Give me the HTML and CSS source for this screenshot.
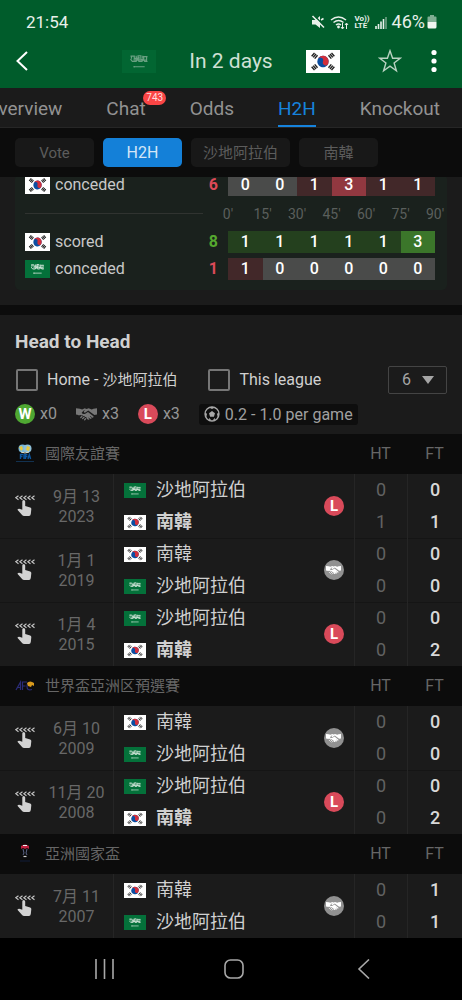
FILE: index.html
```html
<!DOCTYPE html>
<html lang="zh-Hant">
<head>
<meta charset="utf-8">
<meta name="viewport" content="width=device-width, initial-scale=1">
<title>H2H</title>
<link rel="stylesheet" href="styles.css">
</head>
<body>
<svg class="defs" aria-hidden="true">
  <symbol id="kr" viewBox="0 0 36 24" preserveAspectRatio="none">
    <rect width="36" height="24" fill="#fff"/>
    <g transform="rotate(20 18 12)">
      <circle cx="18" cy="12" r="6" fill="#0b4ea2"/>
      <path d="M12 12a6 6 0 0 1 12 0a3 3 0 0 1-6 0a3 3 0 0 0-6 0z" fill="#d22f3c"/>
    </g>
    <g stroke="#222" stroke-width="1.500">
      <path d="M6 6.500l3-3.500M7.600 7.700l3-3.500M9.200 9l3-3.500"/>
      <path d="M30 17.500l-3 3.500M28.400 16.300l-3 3.500M26.800 15l-3 3.500"/>
      <path d="M30 6.500l-3-3.500M28.400 7.700l-3-3.500M26.800 9l-3-3.500"/>
      <path d="M6 17.500l3 3.500M7.600 16.300l3 3.500M9.200 15l3 3.500"/>
    </g>
  </symbol>
  <symbol id="sa" viewBox="0 0 36 24" preserveAspectRatio="none">
    <rect width="36" height="24" fill="#04713a"/>
    <g stroke="#cfe4d7" fill="none">
      <path d="M9 6.500h4v2.500h4v-3h3v4h3v-3h4M9 9.500l2 2.500h4l1-3 2 3h3l2-2 1 2h3M10 6v3M15 6v3M18 7v4M22 6v3M26 7v5M12 10.500h14" stroke-width="1.300"/>
      <path d="M12 17.500h12M13 16.800v1.500" stroke-width="1.100"/>
    </g>
  </symbol>
  <symbol id="shake" viewBox="0 0 24 16">
    <path fill="currentColor" d="M0 1.500L4.500 2l2.500.8L10 1.500l2 .7L14.500 1.500 18 2.800 20 2l4-.5v7.200l-3 .5-7-5.200-3.300 2.300c-1.200.6-2.300-.5-1.500-1.600L11 3.200 8.500 4.300 6.500 6.700c.7 1.800 3 1.600 4.600.6l2.600-1.700 6.200 5.100c.6 1-.6 1.900-1.500 1.200l-2.200-1.600-.3.500 2 1.600c.2 1-.8 1.500-1.600 1.100l-2-1.500-.3.500 1.500 1.300c-.5 1-1.800.7-2.500.1l-.8-.8c0-1.200-.9-1.800-1.900-1.600-.2-1.100-1.200-1.600-2.100-1.200-.4-1-1.600-1.300-2.400-.6-.6-.8-1.800-.7-2.400.1L2.500 9 0 8.700z"/>
    <path d="M5.500 12l1.300-1.300M7.600 13.300l1.500-1.500M9.900 14.500l1-1" stroke="currentColor" stroke-width="1.500" stroke-linecap="round"/>
  </symbol>
  <symbol id="swipe" viewBox="0 0 20 22">
    <path d="M3.500.7L.8 2.700l2.700 2M7.500.7l-2.700 2 2.700 2M11.500.7l-2.700 2 2.700 2M15.500.7l-2.700 2 2.700 2M19.500.7l-2.700 2 2.700 2" fill="none" stroke="#c8c8c8" stroke-width="1.100"/>
    <path d="M7.300 6.500q0-1.500 1.400-1.500t1.500 1.500V11l5 1.500q1.300.5 1.100 1.700L15.800 19q-.3 2-1.800 2H9q-1 0-1.700-.8L2.400 14.800q.9-1.500 2.700-.8l2.200.8z" fill="#d2d2d2"/>
  </symbol>
</svg>

<header class="top">
  <div class="status">
    <time>21:54</time>
    <div class="status-icons">
      <svg width="14" height="14" viewBox="0 0 14 14"><path d="M1 5h3.500L9 1v12L4.500 9.500H1z" fill="#e8f0ea"/><path d="M3 .5l11 11" stroke="#005c2b" stroke-width="1.500"/><path d="M1.500 1L13 12.500M10 5l2.500-1.500" stroke="#e8f0ea" stroke-width="1.600"/></svg>
      <svg width="19" height="15" viewBox="0 0 19 15"><path d="M1 5q7.500-6 15 0M3.500 7.500q5-4 10 0M6 10q2.500-2 5 0" fill="none" stroke="#e8f0ea" stroke-width="1.500"/><circle cx="8.500" cy="12" r="1.400" fill="#e8f0ea"/><path d="M12.500 8v5.500M11 12l1.500 2 1.500-2M16.500 14V8.500M15 10l1.500-2L18 10" fill="none" stroke="#e8f0ea"/></svg>
      <span class="volte"><span>Vo))</span><span>LTE</span></span>
      <svg width="12" height="13" viewBox="0 0 12 13"><path d="M1 13v-3M3.500 13V8M6 13V5.500M8.500 13V3" stroke="#e8f0ea" stroke-width="1.600"/><path d="M11 13V1" stroke="#6fa085" stroke-width="1.600"/></svg>
      <span class="battery"><span>46%</span><svg width="10" height="14" viewBox="0 0 10 14"><path d="M3 0h4v1.500h1.500q1 0 1 1V7h-9V2.500q0-1 1-1H3z" fill="#7fae93"/><path d="M.5 7h9v5q0 1.500-1.500 1.500H2Q.5 13.500.5 12z" fill="#f0f5f1"/></svg></span>
    </div>
  </div>
  <div class="bar">
    <button class="icon-btn" aria-label="Back"><svg width="12" height="20" viewBox="0 0 12 20"><path d="M11 1L1.500 10 11 19" fill="none" stroke="#fff" stroke-width="2"/></svg></button>
    <div class="fixture">
      <svg class="flag-lg dim"><use href="#sa"/></svg>
      <h1>In 2 days</h1>
      <svg class="flag-lg"><use href="#kr"/></svg>
    </div>
    <div class="actions">
      <button class="icon-btn" aria-label="Favourite"><svg width="24" height="24" viewBox="0 0 24 24"><path d="M12 1.800l2.600 7.500h7.600l-6.100 4.700 2.300 7.800-6.400-4.700-6.400 4.700L7.900 14 1.800 9.300h7.600z" fill="none" stroke="#b9d2c2" stroke-width="1.400"/></svg></button>
      <button class="icon-btn" aria-label="More"><svg width="6" height="24" viewBox="0 0 6 24"><circle cx="3" cy="3.500" r="2.600" fill="#fff"/><circle cx="3" cy="12" r="2.600" fill="#fff"/><circle cx="3" cy="20.500" r="2.600" fill="#fff"/></svg></button>
    </div>
  </div>
</header>

<nav class="tabs">
  <a href="#">Overview</a>
  <a href="#">Chat<span class="count">743</span></a>
  <a href="#">Odds</a>
  <a href="#" class="active" aria-current="page">H2H</a>
  <a href="#">Knockout</a>
</nav>

<div class="chips">
  <button>Vote</button>
  <button class="on">H2H</button>
  <button>沙地阿拉伯</button>
  <button>南韓</button>
</div>

<main>
  <section class="stats">
    <div class="card">
      <div class="stat">
        <svg class="flag-md"><use href="#kr"/></svg><span>conceded</span><b class="red">6</b>
        <div class="cells"><i>0</i><i>0</i><i class="r1">1</i><i class="r3">3</i><i class="r1">1</i><i class="r1">1</i></div>
      </div>
      <div class="axis">
        <hr>
        <div class="marks"><span>0'</span><span>15'</span><span>30'</span><span>45'</span><span>60'</span><span>75'</span><span>90'</span></div>
      </div>
      <div class="stat">
        <svg class="flag-md"><use href="#kr"/></svg><span>scored</span><b class="green">8</b>
        <div class="cells"><i class="g1">1</i><i class="g1">1</i><i class="g1">1</i><i class="g1">1</i><i class="g1">1</i><i class="g3">3</i></div>
      </div>
      <div class="stat">
        <svg class="flag-md"><use href="#sa"/></svg><span>conceded</span><b class="red">1</b>
        <div class="cells"><i class="r1">1</i><i>0</i><i>0</i><i>0</i><i>0</i><i>0</i></div>
      </div>
    </div>
  </section>

  <section class="h2h">
    <h2>Head to Head</h2>
    <div class="filters">
      <label class="home"><input type="checkbox"><span>Home - <span class="zh">沙地阿拉伯</span></span></label>
      <label><input type="checkbox"><span>This league</span></label>
      <div class="select">
        <select aria-label="Matches"><option>6</option></select>
        <svg width="12" height="8" viewBox="0 0 12 8"><path d="M0 0h12L6 8z" fill="#a5a5a5"/></svg>
      </div>
    </div>
    <div class="summary">
      <span class="sum"><span class="dot win">W</span>x0</span>
      <span class="sum"><svg class="shake"><use href="#shake"/></svg>x3</span>
      <span class="sum"><span class="dot loss">L</span>x3</span>
      <span class="avg"><svg width="16" height="16" viewBox="0 0 16 16"><circle cx="8" cy="8" r="7" fill="none" stroke="#a8a8a8" stroke-width="1.300"/><path d="M8 5l3 2.200-1.100 3.500H6.100L5 7.200zM5 1.500L8 3l3-1.500L8 .8zM1.300 6L3 8l-.7 3L1 8.500zM14.700 6L13 8l.7 3L15 8.500zM4.500 13.500l1-1.500 2 2.800zM11.500 13.500l-1-1.500-2 2.800z" fill="#a8a8a8"/></svg>0.2 - 1.0 per game</span>
    </div>

    <table>
      <colgroup><col class="c-swipe"><col class="c-date"><col><col class="c-result"><col class="c-ht"><col class="c-ft"></colgroup>
      <tbody>
        <tr class="league"><th colspan="4"><div><svg width="20" height="20" viewBox="0 0 20 20"><circle cx="7.500" cy="4.500" r="4" fill="#79b8d8"/><circle cx="12.500" cy="4.500" r="4" fill="#8fc0d8"/><path d="M4 3l3-1 1 3-2 2zM12 2l3 1-1 4-3-1z" fill="#e9c93f"/><path d="M6 8l4 1 4-1" stroke="#e8e8d0" fill="none"/><path d="M5.500 15v-4.500H8M5.500 12.500h2M9 10v5M10.500 15v-4.500h2M10.500 12.500h2M13 15l1.300-4.500 1.300 4.500" stroke="#0b56a0" stroke-width="1.400" fill="none"/><path d="M1 17.500h18" stroke="#12314f"/></svg><span>國際友誼賽</span></div></th><th>HT</th><th>FT</th></tr>
        <tr class="m"><td rowspan="2" class="swipe"><svg><use href="#swipe"/></svg></td><td rowspan="2" class="date">9月 13<br>2023</td><td class="team"><div><svg><use href="#sa"/></svg>沙地阿拉伯</div></td><td rowspan="2" class="res"><span class="dot loss">L</span></td><td class="ht">0</td><td class="ft">0</td></tr>
        <tr><td class="team won"><div><svg><use href="#kr"/></svg>南韓</div></td><td class="ht">1</td><td class="ft">1</td></tr>
        <tr class="m"><td rowspan="2" class="swipe"><svg><use href="#swipe"/></svg></td><td rowspan="2" class="date">1月 1<br>2019</td><td class="team"><div><svg><use href="#kr"/></svg>南韓</div></td><td rowspan="2" class="res"><span class="dot draw"><svg><use href="#shake"/></svg></span></td><td class="ht">0</td><td class="ft">0</td></tr>
        <tr><td class="team"><div><svg><use href="#sa"/></svg>沙地阿拉伯</div></td><td class="ht">0</td><td class="ft">0</td></tr>
        <tr class="m"><td rowspan="2" class="swipe"><svg><use href="#swipe"/></svg></td><td rowspan="2" class="date">1月 4<br>2015</td><td class="team"><div><svg><use href="#sa"/></svg>沙地阿拉伯</div></td><td rowspan="2" class="res"><span class="dot loss">L</span></td><td class="ht">0</td><td class="ft">0</td></tr>
        <tr><td class="team won"><div><svg><use href="#kr"/></svg>南韓</div></td><td class="ht">0</td><td class="ft">2</td></tr>
      </tbody>
      <tbody>
        <tr class="league"><th colspan="4"><div><svg width="20" height="20" viewBox="0 0 20 20"><path d="M1 14L5.500 6v8M3 11.500h3M7.500 14V6H12M7.500 10h3M16 7q-4-1-4 3.500t5 3" stroke="#2b2c78" stroke-width="1.200" fill="none"/><path d="M12 7q3-3 7 0v3l-2-1-1 2-3-1z" fill="#d99a1c"/></svg><span>世界盃亞洲区預選賽</span></div></th><th>HT</th><th>FT</th></tr>
        <tr class="m"><td rowspan="2" class="swipe"><svg><use href="#swipe"/></svg></td><td rowspan="2" class="date">6月 10<br>2009</td><td class="team"><div><svg><use href="#kr"/></svg>南韓</div></td><td rowspan="2" class="res"><span class="dot draw"><svg><use href="#shake"/></svg></span></td><td class="ht">0</td><td class="ft">0</td></tr>
        <tr><td class="team"><div><svg><use href="#sa"/></svg>沙地阿拉伯</div></td><td class="ht">0</td><td class="ft">0</td></tr>
        <tr class="m"><td rowspan="2" class="swipe"><svg><use href="#swipe"/></svg></td><td rowspan="2" class="date">11月 20<br>2008</td><td class="team"><div><svg><use href="#sa"/></svg>沙地阿拉伯</div></td><td rowspan="2" class="res"><span class="dot loss">L</span></td><td class="ht">0</td><td class="ft">0</td></tr>
        <tr><td class="team won"><div><svg><use href="#kr"/></svg>南韓</div></td><td class="ht">0</td><td class="ft">2</td></tr>
      </tbody>
      <tbody>
        <tr class="league"><th colspan="4"><div><svg width="20" height="20" viewBox="0 0 20 20"><path d="M6 2q4-3 8 0v3l-2-1-2 1-2-1-2 1z" fill="#c0203f"/><path d="M8 1.500h4" stroke="#eee"/><path d="M8 5l1 4-1 2M12 5l-1 4 1 2" stroke="#5c6688" fill="none"/><path d="M8.500 12.500h3" stroke="#ccc" stroke-width="1.200"/><path d="M5 17h10" stroke="#101c38"/></svg><span>亞洲國家盃</span></div></th><th>HT</th><th>FT</th></tr>
        <tr class="m"><td rowspan="2" class="swipe"><svg><use href="#swipe"/></svg></td><td rowspan="2" class="date">7月 11<br>2007</td><td class="team"><div><svg><use href="#kr"/></svg>南韓</div></td><td rowspan="2" class="res"><span class="dot draw"><svg><use href="#shake"/></svg></span></td><td class="ht">0</td><td class="ft">1</td></tr>
        <tr><td class="team"><div><svg><use href="#sa"/></svg>沙地阿拉伯</div></td><td class="ht">0</td><td class="ft">1</td></tr>
      </tbody>
    </table>
  </section>
</main>

<footer class="sysnav">
  <button aria-label="Recents"><svg width="20" height="20" viewBox="0 0 20 20"><path d="M2 0v20M10.500 0v20M19 0v20" stroke="#a8a8a8" stroke-width="1.600"/></svg></button>
  <button aria-label="Home"><svg width="20" height="20" viewBox="0 0 20 20"><rect x="1" y="1" width="18" height="18" rx="5.500" fill="none" stroke="#a8a8a8" stroke-width="1.600"/></svg></button>
  <button aria-label="Back"><svg width="20" height="20" viewBox="0 0 20 20"><path d="M15 .5L5 10l10 9.500" fill="none" stroke="#a8a8a8" stroke-width="1.600"/></svg></button>
</footer>
</body>
</html>
```
FILE: styles.css
```css
* { box-sizing: border-box; }
body {
  margin: 0;
  min-height: 100vh;
  display: flex;
  flex-direction: column;
  background: #000;
  color: #c8c8c8;
  font: 16px/20px Roboto, "Noto Sans CJK TC", sans-serif;
}
svg { display: block; flex: none; }
button { font: inherit; color: inherit; border: 0; background: none; padding: 0; }
.defs { position: absolute; width: 0; height: 0; }

.top { background: #005c2b; }
.status {
  height: 44px;
  padding: 0 25px 0 26px;
  display: flex;
  align-items: center;
  justify-content: space-between;
  color: #e8f0ea;
  font-size: 17px;
}
.status-icons { display: flex; align-items: center; gap: 5px; }
.volte { display: flex; flex-direction: column; font-size: 8px; line-height: 7px; font-weight: 700; }
.battery { display: flex; align-items: center; gap: 2px; font-size: 18px; }
.bar {
  height: 44px;
  padding: 0 16px 10px;
  display: grid;
  grid-template-columns: 1fr auto 1fr;
  align-items: center;
}
.icon-btn { display: flex; }
.fixture { display: flex; justify-content: center; align-items: center; gap: 33px; }
.flag-lg { width: 34px; height: 23px; }
.dim { opacity: .5; }
.actions { display: flex; justify-content: flex-end; gap: 29px; padding-right: 9px; }
h1 { margin: 0; font-size: 21px; font-weight: 400; line-height: 24px; color: #cfe0d5; white-space: nowrap; }

.tabs {
  height: 40px;
  background: #1b1b1b;
  border-bottom: 1px solid #262626;
  display: flex;
  justify-content: flex-end;
  gap: 44px;
  padding-right: 22px;
  overflow: hidden;
}
.tabs a {
  position: relative;
  color: #929292;
  text-decoration: none;
  font-size: 19px;
  line-height: 42px;
}
.tabs .active { color: #1683dd; border-bottom: 2px solid #1683dd; }
.count {
  position: absolute;
  top: 3px;
  left: 37px;
  padding: 0 3px;
  border-radius: 7px;
  background: #fa4545;
  color: #ffdede;
  font-size: 10px;
  line-height: 14px;
}

.chips { background: #0c0c0c; padding: 10px 15px; display: flex; gap: 9px; }
.chips button {
  min-width: 79px;
  height: 29px;
  padding: 0 12px;
  border-radius: 5px;
  background: #181818;
  color: #5c5c5c;
  font-size: 15px;
}
.chips .on { background: #1480d8; color: #d3e6f7; font-size: 16px; }

.stats {
  background: #1b1b1b;
  padding: 0 15px 15px;
  border-bottom: 10px solid #0c0c0c;
  overflow: hidden;
}
.card {
  margin-top: -3px;
  padding: 0 12px 10px 10px;
  border-radius: 5px;
  background: #1a211d;
}
.stat { display: grid; grid-template-columns: 25px 1fr auto 207px; align-items: center; height: 22px; }
.stat + .stat { margin-top: 5px; }
.stat > span { padding-left: 5px; }
.stat > b { padding-right: 10px; }
.flag-md { width: 25px; height: 18px; }
.red { color: #dc4a58; }
.green { color: #55a82f; }
.cells { display: grid; grid-template-columns: repeat(6, 1fr); }
.cells i {
  background: #4a4b4a;
  color: #fff;
  text-align: center;
  font-style: normal;
  font-weight: 500;
  line-height: 22px;
}
.cells .r1 { background: #422829; }
.cells .r3 { background: #913840; }
.cells .g1 { background: #24401e; }
.cells .g3 { background: #3b762a; }
.axis { height: 35px; display: grid; grid-template-columns: 1fr 207px; column-gap: 25px; align-items: center; }
hr { width: 100%; margin: 0; border: 0; border-top: 1px solid #303330; }
.marks { display: flex; justify-content: space-between; color: #5a5f5c; font-size: 14px; }
.marks span { width: 0; display: flex; justify-content: center; }

.h2h { background: #1b1b1b; }
h2 { margin: 0; padding: 17px 15px 14px; font-size: 19px; line-height: 20px; font-weight: 700; color: #d0d0d0; }
.filters { display: flex; align-items: center; padding: 0 15px 0 16px; }
.filters label { display: flex; align-items: center; gap: 9px; color: #d0d0d0; }
.home { margin-right: 31px; }
.zh { font-size: 15px; }
.filters input {
  appearance: none;
  width: 22px;
  height: 22px;
  margin: 0;
  border: 2px solid #767676;
  border-radius: 2px;
}
.select { display: grid; align-items: center; margin-left: auto; width: 59px; }
.select > * { grid-area: 1 / 1; }
.select select {
  appearance: none;
  height: 28px;
  padding: 0 13px;
  border: 1px solid #444;
  border-radius: 2px;
  background: none;
  color: #a5a5a5;
  font: inherit;
}
.select svg { justify-self: end; margin-right: 13px; pointer-events: none; }
.summary { display: flex; align-items: center; gap: 19px; padding: 9px 15px; height: 40px; color: #959595; }
.sum { display: flex; align-items: center; gap: 5px; }
.shake { width: 21px; height: 14px; color: #777; }
.dot {
  display: grid;
  place-items: center;
  width: 20px;
  height: 20px;
  border-radius: 50%;
  color: #fff;
  font-size: 15px;
  font-weight: 700;
}
.win { background: #4fa832; }
.loss { background: #d94a5a; }
.draw { background: #919191; }
.dot svg { width: 15px; height: 10px; }
.avg {
  display: flex;
  align-items: center;
  gap: 5px;
  padding: 0 5px;
  border-radius: 3px;
  background: #0e0e0e;
  line-height: 21px;
  color: #a0a0a0;
}

table { width: 100%; table-layout: fixed; border-collapse: separate; border-spacing: 0; }
.c-swipe { width: 40px; }
.c-date { width: 73px; }
.c-result { width: 40px; }
.c-ht { width: 53px; }
.c-ft { width: 55px; }
td, th { padding: 0; height: 32px; font-weight: 400; }
.league th { height: 40px; background: #0c0c0c; color: #666; }
.league th div { display: flex; align-items: center; gap: 10px; padding-left: 15px; font-size: 15px; }
.swipe svg { width: 20px; height: 22px; margin-left: 15px; }
.date { padding-top: 2px; text-align: center; color: #686868; }
.team { border-left: 1px solid #252525; }
.team div { display: flex; align-items: center; gap: 10px; padding-left: 10px; color: #d0d0d0; font-size: 18px; }
.team svg { width: 22px; height: 15px; }
.won div { font-weight: 700; }
.res .dot { margin: 0 auto; }
.ht, .ft { border-left: 1px solid #252525; text-align: center; font-size: 18px; }
.ht { color: #626262; }
.ft { color: #d8d8d8; font-weight: 500; }
.m:not(.league + .m) > td { box-shadow: inset 0 1px #151515; }

.sysnav { flex: 1; min-height: 62px; padding: 0 83px 0 89px; display: flex; align-items: center; justify-content: space-between; }
.sysnav button { width: 30px; display: flex; justify-content: center; }
```
